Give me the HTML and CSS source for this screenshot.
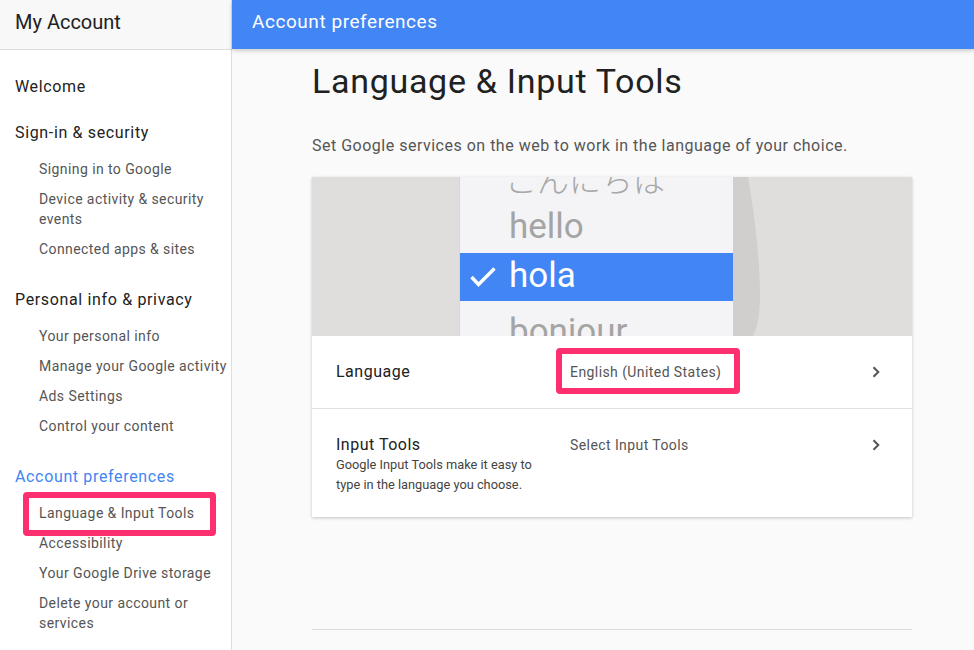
FILE: index.html
```html
<!DOCTYPE html>
<html lang="en">
<head>
<meta charset="utf-8">
<title>Language &amp; Input Tools</title>
<link rel="stylesheet" href="styles.css">
</head>
<body>
<div class="app">
  <aside class="sidebar">
    <div class="brand">My Account</div>
    <nav class="nav">
      <section class="nav-section">
        <div class="nav-head">Welcome</div>
      </section>
      <section class="nav-section">
        <div class="nav-head">Sign-in &amp; security</div>
        <ul class="nav-list">
          <li>Signing in to Google</li>
          <li>Device activity &amp; security events</li>
          <li>Connected apps &amp; sites</li>
        </ul>
      </section>
      <section class="nav-section">
        <div class="nav-head">Personal info &amp; privacy</div>
        <ul class="nav-list">
          <li>Your personal info</li>
          <li>Manage your Google activity</li>
          <li>Ads Settings</li>
          <li>Control your content</li>
        </ul>
      </section>
      <section class="nav-section">
        <div class="nav-head nav-head-active">Account preferences</div>
        <ul class="nav-list">
          <li><span class="mark mark-nav">Language &amp; Input Tools</span></li>
          <li>Accessibility</li>
          <li>Your Google Drive storage</li>
          <li>Delete your account or services</li>
        </ul>
      </section>
    </nav>
  </aside>

  <main class="main">
    <header class="topbar">Account preferences</header>
    <div class="content">
      <h1 class="title">Language &amp; Input Tools</h1>
      <p class="lead">Set Google services on the web to work in the language of your choice.</p>

      <div class="card">
        <div class="hero">
          <div class="hero-side"></div>
          <div class="hero-phone">
            <ul class="words">
              <li class="word word-jp">こんにちは</li>
              <li class="word">hello</li>
              <li class="word word-selected">
                <svg class="check" width="26" height="20" viewBox="0 0 26 20"><path d="M1.5 10 L8.5 17.5 L24.5 1.5" fill="none" stroke="#fff" stroke-width="3.4"/></svg>
                <span>hola</span>
              </li>
              <li class="word word-after">bonjour</li>
            </ul>
          </div>
          <div class="hero-right">
            <svg class="edge" width="40" height="159" viewBox="0 0 40 159"><path d="M0 0 H15 C21 35 27 80 27 118 C27 138 24 152 20 159 H0 Z" fill="#d0cfce"/></svg>
          </div>
        </div>

        <div class="row row-center">
          <div class="row-label">Language</div>
          <div class="row-value"><span class="mark mark-value">English (United States)</span></div>
          <svg class="chev" width="8" height="12" viewBox="0 0 8 12"><path d="M1.5 1.2 L6.3 6 L1.5 10.8" fill="none" stroke="#555" stroke-width="2"/></svg>
        </div>

        <div class="row row-top">
          <div class="row-label">
            <div class="row-title">Input Tools</div>
            <div class="row-desc">Google Input Tools make it easy to type in the language you choose.</div>
          </div>
          <div class="row-value">Select Input Tools</div>
          <svg class="chev chev-top" width="8" height="12" viewBox="0 0 8 12"><path d="M1.5 1.2 L6.3 6 L1.5 10.8" fill="none" stroke="#555" stroke-width="2"/></svg>
        </div>
      </div>

      <div class="rule"></div>
    </div>
  </main>
</div>
</body>
</html>
```

FILE: styles.css
```css
* { box-sizing: border-box; }

html, body {
  margin: 0;
  padding: 0;
  height: 650px;
  overflow: hidden;
}

body {
  font-family: Roboto, "Noto Sans", "Liberation Sans", sans-serif;
  color: #212121;
  background: #fafafa;
}

.app {
  display: flex;
  height: 650px;
}

/* Sidebar */
.sidebar {
  width: 232px;
  flex: none;
  background: #fff;
  border-right: 1px solid #dedede;
  height: 650px;
}

.brand {
  height: 50px;
  line-height: 45px;
  padding-left: 15px;
  font-size: 20px;
  color: #212121;
  background: #f8f8f8;
  border-bottom: 1px solid #dcdcdc;
}

.nav {
  padding-top: 25px;
}

.nav-section {
  margin-bottom: 24px;
}

.nav-section:first-child {
  margin-bottom: 22px;
}

.nav-head {
  font-size: 16px;
  line-height: 24px;
  padding-left: 15px;
  color: #222;
  letter-spacing: 0.65px;
}

.nav-head-active {
  color: #4285f4;
}

.nav-list {
  list-style: none;
  margin: 9px 0 0;
  padding: 0 0 0 39px;
}

.nav-list li {
  font-size: 14px;
  line-height: 20px;
  padding: 5px 0;
  color: #555;
  letter-spacing: 0.42px;
}

/* annotation boxes */
.mark {
  position: relative;
  display: inline-block;
}

.mark::after {
  content: "";
  position: absolute;
  border: 6px solid #fe2f6e;
  border-radius: 4px;
}

.mark-nav::after {
  left: -16px;
  right: -22px;
  top: -11px;
  bottom: -13px;
}

.mark-value::after {
  left: -14px;
  right: -19px;
  top: -14px;
  bottom: -12px;
}

/* Main */
.main {
  flex: 1;
  min-width: 0;
  background: #fafafa;
}

.topbar {
  height: 49px;
  padding: 10px 0 0 20px;
  line-height: 24px;
  font-size: 19px;
  color: #fff;
  background: #4285f4;
  letter-spacing: 0.55px;
  box-shadow: 0 2px 4px rgba(0, 0, 0, 0.18);
}

.content {
  padding-left: 80px;
  width: 680px;
}

.title {
  margin: 0;
  padding-top: 12px;
  font-size: 34px;
  line-height: 40px;
  font-weight: 400;
  color: #212121;
  letter-spacing: 0.7px;
}

.lead {
  margin: 33px 0 19px;
  font-size: 16px;
  line-height: 24px;
  color: #555;
  letter-spacing: 0.5px;
}

.card {
  width: 600px;
  background: #fff;
  box-shadow: 0 1px 3px rgba(0, 0, 0, 0.22);
}

.hero {
  display: flex;
  height: 159px;
  overflow: hidden;
}

.hero-side {
  width: 147px;
  background: #dfdedd;
}

.hero-phone {
  width: 274px;
  background: #f4f4f6;
  border-left: 1px solid #d6d6d6;
  overflow: hidden;
}

.hero-right {
  flex: 1;
  background: #dfdedd;
}

.edge {
  display: block;
}

.words {
  list-style: none;
  margin: -20px 0 0;
  padding: 0;
}

.word {
  height: 48px;
  line-height: 44px;
  padding-left: 49px;
  font-size: 35px;
  color: #a4a4a4;
  white-space: nowrap;
}

.word-jp {
  font-family: "Noto Sans CJK JP", sans-serif;
  font-weight: 300;
  font-size: 32px;
  padding-left: 45px;
  line-height: 42px;
  color: #a8a8a8;
}

.word-after {
  padding-top: 9px;
  height: 60px;
}

.word-selected {
  display: flex;
  align-items: center;
  gap: 13px;
  padding-left: 10px;
  background: #4285f4;
  color: #fff;
}

.word-selected span {
  line-height: 42px;
  margin-top: -3px;
}

.check {
  flex: none;
  margin-top: -1px;
}

.row {
  display: flex;
  padding: 0 32px 0 24px;
}

.row-center {
  height: 73px;
  align-items: center;
  border-bottom: 1px solid #e0e0e0;
}

.row-top {
  align-items: flex-start;
  padding-top: 26px;
  padding-bottom: 22px;
}

.row-label {
  width: 234px;
  flex: none;
  font-size: 16px;
  line-height: 24px;
  color: #212121;
  letter-spacing: 0.5px;
}

.row-title {
  font-size: 16px;
  line-height: 20px;
}

.row-desc {
  font-size: 12.8px;
  line-height: 20px;
  color: #444;
  width: 210px;
  letter-spacing: 0;
}

.row-value {
  flex: 1;
  font-size: 14px;
  line-height: 20px;
  color: #555;
  letter-spacing: 0.42px;
}

.chev {
  flex: none;
}

.chev-top {
  margin-top: 4px;
}

.rule {
  width: 600px;
  margin-top: 112px;
  border-top: 1px solid #dcdcdc;
}
```
